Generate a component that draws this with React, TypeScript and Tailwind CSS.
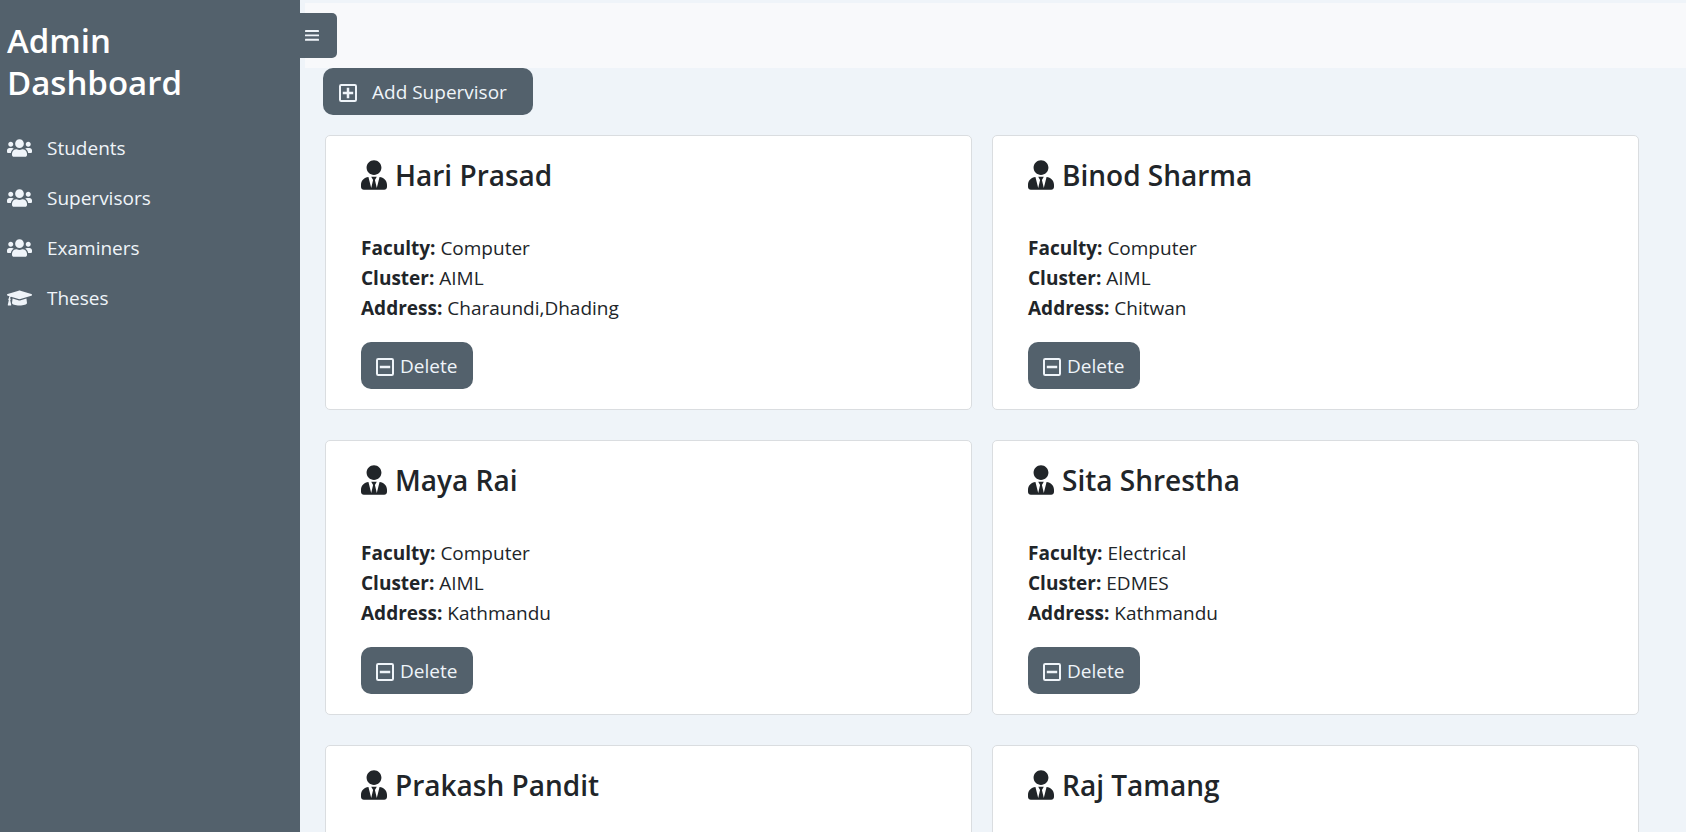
import React from "react";
import { FaGraduationCap, FaUsers, FaUserTie } from "react-icons/fa";

type Supervisor = {
  name: string;
  faculty: string;
  cluster: string;
  address: string;
};

const navItems = [
  { label: "Students", Icon: FaUsers },
  { label: "Supervisors", Icon: FaUsers },
  { label: "Examiners", Icon: FaUsers },
  { label: "Theses", Icon: FaGraduationCap },
];

const supervisors: Supervisor[] = [
  { name: "Hari Prasad", faculty: "Computer", cluster: "AIML", address: "Charaundi,Dhading" },
  { name: "Binod Sharma", faculty: "Computer", cluster: "AIML", address: "Chitwan" },
  { name: "Maya Rai", faculty: "Computer", cluster: "AIML", address: "Kathmandu" },
  { name: "Sita Shrestha", faculty: "Electrical", cluster: "EDMES", address: "Kathmandu" },
  { name: "Prakash Pandit", faculty: "Computer", cluster: "AIML", address: "Kathmandu" },
  { name: "Raj Tamang", faculty: "Electrical", cluster: "EDMES", address: "Kathmandu" },
];

function SquareIcon({ plus = false }: { plus?: boolean }) {
  return (
    <svg viewBox="0 0 18 18" className="h-[18px] w-[18px] shrink-0" fill="none" aria-hidden="true">
      <rect x="1" y="1" width="16" height="16" rx="1.2" stroke="currentColor" strokeWidth="2" />
      <path
        d={plus ? "M3.8 9h10.4M9 3.8v10.4" : "M3.8 9h10.4"}
        stroke="currentColor"
        strokeWidth="2.5"
      />
    </svg>
  );
}

function MenuIcon() {
  return (
    <svg viewBox="0 0 14 11" className="h-[11px] w-[14px]" fill="currentColor" aria-hidden="true">
      <rect x="0" y="0" width="14" height="2" rx="0.4" />
      <rect x="0" y="4.4" width="14" height="1.9" rx="0.4" />
      <rect x="0" y="8.8" width="14" height="2" rx="0.4" />
    </svg>
  );
}

function Sidebar() {
  return (
    <aside className="sticky top-0 h-screen w-[300px] shrink-0 bg-[#53616c] px-[7px] pt-5">
      <h1 className="text-[33px] leading-[42px] font-semibold text-white">
        Admin
        <br />
        Dashboard
      </h1>
      <nav className="mt-[19px]">
        <ul>
          {navItems.map(({ label, Icon }) => (
            <li key={label}>
              <a href="#" className="flex h-[50px] items-center gap-[15px] text-[#eff4f9]">
                <Icon className="h-5 w-[25px]" />
                {label}
              </a>
            </li>
          ))}
        </ul>
      </nav>
    </aside>
  );
}

function SupervisorCard({ supervisor }: { supervisor: Supervisor }) {
  return (
    <article className="rounded-[5px] border border-[#dadde0] bg-white px-[35px] pt-[19px] pb-5">
      <h2 className="flex h-10 items-center gap-2 text-[28px] leading-9 font-semibold">
        <FaUserTie className="h-[30px] w-[26px]" />
        {supervisor.name}
      </h2>
      <div className="mt-[38px] leading-[30px]">
        <p>
          <b>Faculty:</b> {supervisor.faculty}
        </p>
        <p>
          <b>Cluster:</b> {supervisor.cluster}
        </p>
        <p>
          <b>Address:</b> {supervisor.address}
        </p>
      </div>
      <button
        type="button"
        className="mt-[19px] flex h-[47px] items-center gap-1.5 rounded-[10px] bg-[#53616c] pt-0.5 pr-4 pl-[15px] text-[#eff4f9]"
      >
        <SquareIcon />
        Delete
      </button>
    </article>
  );
}

export default function App() {
  return (
    <div className="flex min-h-screen items-start bg-[#eff4f9] font-['Open_Sans','Noto_Sans',sans-serif] text-[19px] text-[#212529]">
      <Sidebar />
      <div className="flex min-w-0 flex-1 flex-col pt-[3px]">
        <header className="ml-[5px] h-[65px] shrink-0 bg-[#f8f9fb] pt-[10px]">
          <button
            type="button"
            aria-label="Toggle menu"
            className="-ml-[5px] flex h-[45px] w-[37px] items-center rounded-r-[5px] bg-[#53616c] pl-[5px] text-[#eff4f9]"
          >
            <MenuIcon />
          </button>
        </header>
        <main className="pr-[47px] pb-[30px] pl-[23px]">
          <button
            type="button"
            className="flex h-[47px] items-center gap-[15px] rounded-[10px] bg-[#53616c] pt-0.5 pr-[26px] pl-4 text-[#eff4f9]"
          >
            <SquareIcon plus />
            Add Supervisor
          </button>
          <section className="mt-5 ml-0.5 grid grid-cols-2 gap-x-5 gap-y-[30px]">
            {supervisors.map((s) => (
              <SupervisorCard key={s.name} supervisor={s} />
            ))}
          </section>
        </main>
      </div>
    </div>
  );
}
